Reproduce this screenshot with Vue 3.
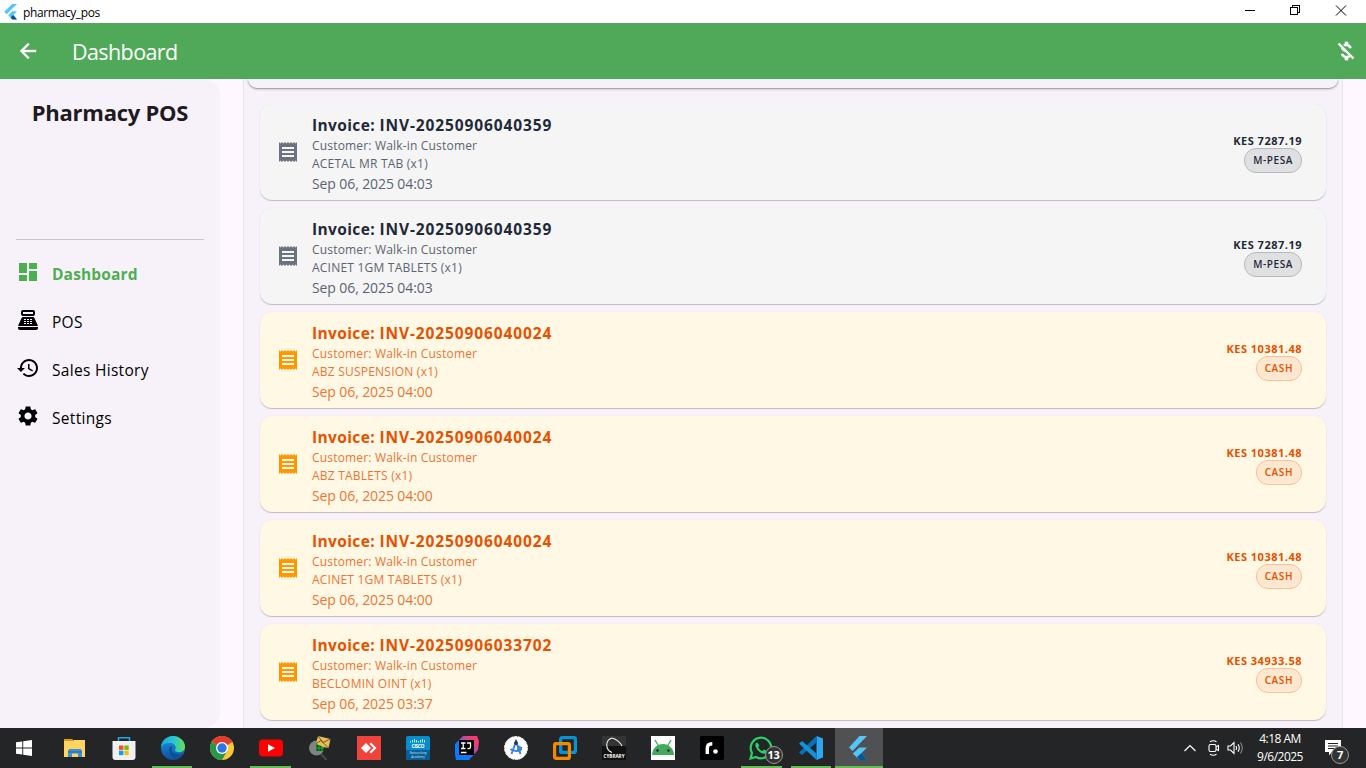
<script setup>
const receipt = 'M18 17H6v-2h12v2zm0-4H6v-2h12v2zm0-4H6V7h12v2zM3 22l1.5-1.5L6 22l1.5-1.5L9 22l1.5-1.5L12 22l1.5-1.5L15 22l1.5-1.5L18 22l1.5-1.5L21 22V2l-1.5 1.5L18 2l-1.5 1.5L15 2l-1.5 1.5L12 2l-1.5 1.5L9 2 7.5 3.5 6 2 4.5 3.5 3 2v20z'

const menu = [
  { label: 'Dashboard', active: true, d: 'M3 13h8V3H3v10zm0 8h8v-6H3v6zm10 0h8V11h-8v10zm0-18v6h8V3h-8z' },
  { label: 'POS', cls: 'pos', d: 'M17 2H7c-1.1 0-2 .9-2 2v2c0 1.1.9 2 2 2h10c1.1 0 2-.9 2-2V4c0-1.1-.9-2-2-2zm0 4H7V4h10v2zm3 16H4c-1.1 0-2-.9-2-2v-1h20v1c0 1.1-.9 2-2 2zm-1.47-11.81C18.21 9.47 17.49 9 16.7 9H7.3c-.79 0-1.51.47-1.83 1.19L2 18h20l-3.47-7.81zM9.500 16h-1.500v-1h2v1zm0-2h-1.500v-1h2v1zm0-2h-1.500v-1h2v1zm3.500 4h-2v-1h2v1zm0-2h-2v-1h2v1zm0-2h-2v-1h2v1zm3 4h-2v-1h2v1zm0-2h-2v-1h2v1zm0-2h-2v-1h2v1z' },
  { label: 'Sales History', cls: 'hist', d: 'M13 3c-4.97 0-9 4.03-9 9H1l3.89 3.89.07.14L9 12H6c0-3.87 3.13-7 7-7s7 3.13 7 7-3.13 7-7 7c-1.93 0-3.68-.79-4.94-2.06l-1.42 1.42C8.27 19.99 10.51 21 13 21c4.97 0 9-4.03 9-9s-4.03-9-9-9zm-1 5v5l4.28 2.54.72-1.21-3.5-2.08V8H12z' },
  { label: 'Settings', cls: 'set', d: 'M19.14 12.94c.04-.3.06-.61.06-.94 0-.32-.02-.64-.07-.94l2.03-1.58c.18-.14.23-.41.12-.61l-1.92-3.32c-.12-.22-.37-.29-.59-.22l-2.39.96c-.5-.38-1.03-.7-1.62-.94l-.36-2.54c-.04-.24-.24-.41-.48-.41h-3.84c-.24 0-.43.17-.47.41l-.36 2.54c-.59.24-1.13.57-1.62.94l-2.39-.96c-.22-.08-.47 0-.59.22L2.74 8.87c-.12.21-.08.47.12.61l2.03 1.58c-.05.3-.09.63-.09.94s.02.64.07.94l-2.03 1.58c-.18.14-.23.41-.12.61l1.92 3.32c.12.22.37.29.59.22l2.39-.96c.5.38 1.03.7 1.62.94l.36 2.54c.05.24.24.41.48.41h3.84c.24 0 .44-.17.47-.41l.36-2.54c.59-.24 1.13-.56 1.62-.94l2.39.96c.22.08.47 0 .59-.22l1.92-3.32c.12-.22.07-.47-.12-.61l-2.01-1.58zM12 15.6c-1.98 0-3.6-1.62-3.6-3.6s1.62-3.6 3.6-3.6 3.6 1.62 3.6 3.6-1.62 3.6-3.6 3.6z' },
]

const invoices = [
  { no: 'INV-20250906040359', item: 'ACETAL MR TAB (x1)', date: 'Sep 06, 2025 04:03', total: '7287.19', pay: 'M-PESA' },
  { no: 'INV-20250906040359', item: 'ACINET 1GM TABLETS (x1)', date: 'Sep 06, 2025 04:03', total: '7287.19', pay: 'M-PESA' },
  { no: 'INV-20250906040024', item: 'ABZ SUSPENSION (x1)', date: 'Sep 06, 2025 04:00', total: '10381.48', pay: 'CASH' },
  { no: 'INV-20250906040024', item: 'ABZ TABLETS (x1)', date: 'Sep 06, 2025 04:00', total: '10381.48', pay: 'CASH' },
  { no: 'INV-20250906040024', item: 'ACINET 1GM TABLETS (x1)', date: 'Sep 06, 2025 04:00', total: '10381.48', pay: 'CASH' },
  { no: 'INV-20250906033702', item: 'BECLOMIN OINT (x1)', date: 'Sep 06, 2025 03:37', total: '34933.58', pay: 'CASH' },
]
</script>

<template>
  <div class="window">
    <header class="titlebar">
      <svg class="logo" width="13" height="16" viewBox="0 0 13 16">
        <path d="M8.200 0H13L2.600 10.200.200 7.800z" fill="#54c5f8" />
        <path d="M8.200 7.300H13L9.400 11 13 15.500H8.500L4.200 11.200z" fill="#54c5f8" />
        <path d="M6.600 13.500L9.200 11.100 13 15.500H8.500z" fill="#01579b" />
      </svg>
      <span class="app-name">pharmacy_pos</span>
      <svg class="controls" width="121" height="23" viewBox="0 0 121 23" fill="none" stroke="#000" shape-rendering="crispEdges">
        <path d="M0 10.500h10M45.500 7.500h7v7h-7zM47.500 7V5.500h7v7H53" />
        <path d="M91 5.500l10 10M101 5.500l-10 10" shape-rendering="auto" />
      </svg>
    </header>

    <div class="appbar">
      <svg width="24" height="24" viewBox="0 0 24 24" fill="#fff" stroke="#fff" stroke-width=".4"><path d="M20 11H7.830l5.590-5.590L12 4l-8 8 8 8 1.410-1.410L7.830 13H20v-2z" /></svg>
      <h1>Dashboard</h1>
      <svg class="money" width="24" height="24" viewBox="0 0 24 24" fill="#fff" stroke="#fff" stroke-width=".7"><path d="M12.500 6.900c1.780 0 2.440.85 2.500 2.100h2.210c-.07-1.720-1.120-3.300-3.210-3.810V3h-3v2.160c-.53.12-1.030.3-1.480.54l1.470 1.470c.41-.17.91-.27 1.510-.27zM5.330 4.060L4.060 5.330 7.500 8.770c0 2.080 1.560 3.210 3.910 3.910l3.510 3.510c-.34.48-1.050.91-2.420.91-2.060 0-2.870-.92-2.980-2.100h-2.200c.12 2.190 1.760 3.420 3.680 3.830V21h3v-2.150c.96-.18 1.820-.55 2.450-1.120l2.220 2.220 1.270-1.270L5.330 4.060z" /></svg>
    </div>

    <div class="body">
      <aside>
        <div class="brand">Pharmacy POS</div>
        <nav>
          <div v-for="m in menu" :key="m.label" class="nav-item" :class="[m.cls, { active: m.active }]">
            <svg width="24" height="24" viewBox="0 0 24 24" fill="currentColor" fill-rule="evenodd"><path :d="m.d" /></svg>
            <span>{{ m.label }}</span>
          </div>
        </nav>
      </aside>
      <main>
        <div class="summary"></div>
        <article v-for="(v, i) in invoices" :key="i" :class="{ cash: v.pay === 'CASH' }">
          <svg width="24" height="24" viewBox="0 0 24 24" class="receipt"><path :d="receipt" /></svg>
          <div class="info">
            <div class="no">Invoice: <span>{{ v.no }}</span></div>
            <div class="small">Customer: Walk-in Customer</div>
            <div class="small caps">{{ v.item }}</div>
            <div class="date">{{ v.date }}</div>
          </div>
          <div class="amount">
            <div class="total">KES {{ v.total }}</div>
            <div class="chip">{{ v.pay }}</div>
          </div>
        </article>
      </main>
    </div>

    <footer class="taskbar">
      <div class="task">
        <svg width="16" height="16" viewBox="0 0 16 16" fill="#fff"><path d="M0 2.300l6.300-.9v6.100H0zM7.200 1.300L16 0v7.500H7.200zM0 8.400h6.300v6.200L0 13.700zM7.200 8.400H16V16l-8.800-1.300z" /></svg>
      </div>
      <div class="task">
        <svg width="24" height="24" viewBox="0 0 24 24"><path d="M1 3h8.500l1.500 2.500H1z" fill="#e09b00" /><path d="M1 5h9l1-1h11v17H1z" fill="#ffd561" /><path d="M5 21v-6.500L6.500 13h11l1.500 1.500V21h-4v-3.500H9V21z" fill="#3d91d3" /><path d="M5 15h14v2H5z" fill="#2a7fc4" /></svg>
      </div>
      <div class="task">
        <svg width="24" height="24" viewBox="0 0 24 24"><path d="M6.500 6V1.700h11V6" fill="none" stroke="#1ca9e8" stroke-width="1.500" /><path d="M.5 5h23v16a3 3 0 0 1-3 3h-17a3 3 0 0 1-3-3z" fill="#f0f0f0" /><path d="M7 9.500h4.400v4.400H7z" fill="#f25022" /><path d="M12.300 9.500h4.400v4.400h-4.400z" fill="#7fba00" /><path d="M7 14.700h4.400v4.400H7z" fill="#00a4ef" /><path d="M12.300 14.700h4.400v4.400h-4.400z" fill="#ffb900" /></svg>
      </div>
      <div class="task open">
        <svg width="24" height="24" viewBox="0 0 24 24">
          <defs>
            <linearGradient id="eg1"><stop stop-color="#1aa7df" /><stop offset=".55" stop-color="#2bc7cc" /><stop offset="1" stop-color="#65e04e" /></linearGradient>
            <linearGradient id="eg2" x1="0" y1="0" x2="0" y2="1"><stop stop-color="#1b9ae0" /><stop offset="1" stop-color="#0c4fa3" /></linearGradient>
          </defs>
          <circle cx="12" cy="12" r="12" fill="url(#eg2)" />
          <path d="M0 11C.5 5 5.500 0 12 0s12 5 12 10.700c0 3.300-2.600 5.500-5.800 5.500-3 0-4.500-1.200-4.300-2 .2-.7 1-1.200.8-3C14.400 8.500 11.800 7 8.800 7 4.500 7 1.200 8.700 0 11z" fill="url(#eg1)" />
          <path d="M8.700 11.500C6.500 17 10.500 21.700 15 21.900c3 .1 5.500-1.400 7.300-3.400.4-.5 0-.9-.5-.7-5 2-9.500.2-10.900-2.700-.7-1.500-.4-3.200.5-4.400-1-.5-2.200-.1-2.700.8z" fill="#0d4f96" />
        </svg>
      </div>
      <div class="task">
        <svg width="24" height="24" viewBox="0 0 24 24"><circle cx="12" cy="12" r="12" fill="#fcc934" /><path d="M12 12L1.600 6A12 12 0 0 1 22.400 6z" fill="#e33b2e" /><path d="M1.600 6A12 12 0 0 0 12 24l5.200-9L12 12z" fill="#279847" /><circle cx="12" cy="12" r="6" fill="#fff" /><circle cx="12" cy="12" r="4.700" fill="#2b75e8" /></svg>
      </div>
      <div class="task open">
        <svg width="24" height="24" viewBox="0 0 24 24"><rect y="3.500" width="24" height="17" rx="4" fill="#f00" /><path d="M9 8.300l7 3.700-7 3.700z" fill="#fff" /></svg>
      </div>
      <div class="task">
        <svg width="24" height="24" viewBox="0 0 24 24"><path d="M13 18l5.500 6" stroke="#444c50" stroke-width="2" /><circle cx="8.500" cy="12" r="7.500" fill="#7e8580" /><path d="M8.500 6h7.500v9H8.500z" fill="#0b4d14" /><path d="M8.500 8.500H16M8.500 12H16M11 6v9M14 6v9" stroke="#16b329" stroke-width="1" /><path d="M10 0l12.500 3-2 9-5.500-1-7-3.500z" fill="#e8bd59" /><path d="M10 0l5 6.500 7.500-3.500M8 7.500l5-3 7.500 7.500" fill="none" stroke="#564316" stroke-width=".8" /></svg>
      </div>
      <div class="task">
        <svg width="24" height="24" viewBox="0 0 24 24"><path d="M0 0h24v24H0z" fill="#ef443b" /><path d="M4 12l5-5 5 5-5 5zM12.500 8L14 6.500l5.500 5.500-5.500 5.500-1.500-1.500 4-4z" fill="#fff" /></svg>
      </div>
      <div class="task">
        <svg width="24" height="24" viewBox="0 0 24 24"><rect width="24" height="24" rx="2" fill="#078dcc" /><path d="M0 14h24v8a2 2 0 0 1-2 2H2a2 2 0 0 1-2-2z" fill="#075d96" /><path d="M4.500 5v1.500M6.500 4v2.500M8.500 3v3.500M10.500 4v2.500M12.500 5v1.500M14.500 4v2.500M16.500 3v3.500M18.500 4v2.500" stroke="#d8f4ff" stroke-width=".9" /><text x="12" y="12" text-anchor="middle" font-size="5" font-weight="700" fill="#fff" textLength="13">CISCO</text><text x="12" y="18" text-anchor="middle" font-size="3.200" fill="#c8e3f3">Networking</text><text x="12" y="21.500" text-anchor="middle" font-size="3.200" fill="#c8e3f3">Academy</text></svg>
      </div>
      <div class="task">
        <svg width="24" height="24" viewBox="0 0 24 24"><defs><linearGradient id="ij" x1="0" y1="1" x2="1" y2="0"><stop stop-color="#087cfa" /><stop offset=".35" stop-color="#087cfa" /><stop offset=".55" stop-color="#8a55c8" /><stop offset=".75" stop-color="#e83e7b" /><stop offset="1" stop-color="#fe3968" /></linearGradient></defs><path d="M8 0h14l2 5-1 9-9 10H1l-1-6V8z" fill="url(#ij)" /><path d="M4 4h15v15H4z" fill="#000" /><path d="M6 7h4.500M8.200 7v5.500M6 12.500h4.500M12 7h3.500v4c0 1.500-1.500 2-3 1.300M6 16.500h5.500" fill="none" stroke="#fff" stroke-width="1.300" /></svg>
      </div>
      <div class="task">
        <svg width="24" height="24" viewBox="0 0 24 24"><circle cx="12" cy="12" r="11.500" fill="#fff" stroke="#e8eaed" stroke-dasharray="3 1" /><path d="M14 9l4.500 2.500-2 4h-4z" fill="#34a866" /><path d="M11.500 7L7.500 18M12.500 7l4 11M6.500 13c3 2.500 8.500 2.500 11 0" fill="none" stroke="#3c82ee" stroke-width="2" /><circle cx="12" cy="7" r="2" fill="#263b50" /><path d="M12 3.500v3" stroke="#263b50" stroke-width="1.500" /></svg>
      </div>
      <div class="task">
        <svg width="24" height="24" viewBox="0 0 24 24" fill="none" stroke-width="3.200"><rect x="7.600" y="1.600" width="14.800" height="14.800" rx="1.500" stroke="#0d91d2" /><rect x="1.600" y="7.600" width="14.800" height="14.800" rx="1.500" stroke="#f38b00" /><path d="M7.600 10v4.900a1.500 1.500 0 0 0 1.500 1.500H11" stroke="#0d91d2" /></svg>
      </div>
      <div class="task">
        <svg width="24" height="24" viewBox="0 0 24 24"><path d="M0 0h24v24H0z" fill="#111" /><path d="M0 0h24v10H0z" fill="#343434" /><path d="M10 2C3 4 3 14 10 16.500M10 2c5 1.500 8 4 10 8" fill="none" stroke="#eee" stroke-width="1.100" /><text x="12" y="22.300" text-anchor="middle" font-size="5" font-weight="700" fill="#fff" textLength="21" lengthAdjust="spacingAndGlyphs">CYBRARY</text></svg>
      </div>
      <div class="task">
        <svg width="24" height="24" viewBox="0 0 24 24"><path d="M0 0h24v24H0z" fill="#fff" /><path d="M1 19C1.500 12 6 8 12 8s10.500 4 11 11z" fill="#43aa5b" /><path d="M4 4l3.500 6M20 4l-3.500 6" stroke="#43aa5b" stroke-width="1.400" /><circle cx="6.500" cy="14.500" r="1.200" fill="#123" /><circle cx="17.500" cy="14.500" r="1.200" fill="#123" /></svg>
      </div>
      <div class="task">
        <svg width="24" height="24" viewBox="0 0 24 24"><rect width="24" height="24" rx="2" fill="#000" /><path d="M7.300 18v-6c0-3 1.700-4.300 5-4.300" fill="none" stroke="#fff" stroke-width="3.400" /><circle cx="15.500" cy="15.500" r="2.300" fill="#fff" /></svg>
      </div>
      <div class="task open">
        <svg width="24" height="24" viewBox="0 0 24 24"><path d="M1.500 22.500L3 17a10.300 10.300 0 1 1 4 4z" fill="none" stroke="#25d366" stroke-width="2.200" /><path d="M8.200 6.500c-1.200.2-2 1.500-1.800 3 .5 3.800 5 8 8.500 8.300 1.700 0 3-1.200 3-2.700l-3-1.700-1.500 1.500c-1.800-.5-3.600-2.400-4.200-4l1.200-1.500z" fill="#25d366" /></svg>
        <span class="badge">13</span>
      </div>
      <div class="task open">
        <svg width="24" height="24" viewBox="0 0 24 24"><path d="M17.500 0L24 2.500v19L17.500 24z" fill="#2ba7f2" /><path d="M17.500 0v6.500L3 19 0 16.500z" fill="#0870b8" /><path d="M17.500 24v-6.500L3 5 0 7.500z" fill="#1590dc" /></svg>
      </div>
      <div class="task current">
        <svg width="24" height="24" viewBox="0 0 24 24"><path d="M12.500 0H20L5.500 15 2 11.500z" fill="#54c5f8" /><path d="M12.500 11.500H20L14.500 17l5.500 7h-7.500l-6.700-6.500z" fill="#54c5f8" /><path d="M10 21l4.500-4 5.500 7h-7.500z" fill="#01579b" /></svg>
      </div>

      <div class="tray">
        <svg width="12" height="8" viewBox="0 0 12 8" fill="none" stroke="#fff" stroke-width="1.200"><path d="M.5 7L6 1.500 11.500 7" /></svg>
        <svg class="meet" width="12" height="16" viewBox="0 0 12 16" fill="none" stroke="#fff" stroke-width="1.100"><rect x="1" y="4.500" width="7" height="7" rx="1.500" /><path d="M8 7l2.500-1.500v5L8 9M2 1.800C4 .5 6.500.5 8.500 1.800M2 14.200c2 1.300 4.500 1.300 6.500 0" /></svg>
        <svg class="vol" width="17" height="14" viewBox="0 0 17 14" fill="none" stroke="#fff" stroke-width="1.100"><path d="M1 5h2.500L7 1.500v11L3.500 9H1z" /><path d="M9 5q1.200 2 0 4M11 3.300q2.500 3.700 0 7.400" /><path d="M13.300 1.500q4 5.500 0 11" stroke="#888" /></svg>
        <div class="clock"><div>4:18 AM</div><div>9/6/2025</div></div>
        <div class="notice">
          <svg width="16" height="16" viewBox="0 0 16 16"><path d="M0 0h16v12H7l-3 3.500V12H0z" fill="#fff" /><path d="M3 3.500h10M3 6h10M3 8.500h7" stroke="#222" /></svg>
          <span class="badge">7</span>
        </div>
      </div>
    </footer>
  </div>
</template>

<style>
body { margin: 0; overflow: hidden; }
</style>

<style scoped>
.window { width: 1366px; height: 768px; display: flex; flex-direction: column; overflow: hidden; background: #fef7ff; font-family: "Open Sans", "Noto Sans", sans-serif; color: #1d1b20; }
.window svg { display: block; flex: none; }
.titlebar { height: 23px; flex: none; display: flex; align-items: center; background: #fff; color: #000; box-sizing: border-box; padding-left: 4px; }
.app-name { margin: 1px 0 0 6px; font-size: 12px; letter-spacing: -.37px; white-space: nowrap; }
.controls { margin-left: auto; }
.appbar { height: 56px; flex: none; display: flex; align-items: center; background: #50a958; box-sizing: border-box; padding: 0 8px 0 16px; }
.appbar h1 { margin: 1px 0 0 32px; font-size: 21.500px; line-height: 28px; font-weight: 400; letter-spacing: -.6px; color: #fff; }
.money { margin-left: auto; }
.body { flex: 1; min-height: 0; display: flex; gap: 23px; }
aside { width: 220px; box-sizing: border-box; padding: 0 16px; background: #f7f2fa; border-radius: 0 16px 16px 0; }
.brand { height: 161px; padding-top: 17px; box-sizing: border-box; border-bottom: 1px solid #cac4d0; text-align: center; font-size: 22px; line-height: 32px; font-weight: 700; letter-spacing: -.25px; white-space: nowrap; }
nav { padding-top: 9px; }
.nav-item { height: 48px; display: flex; align-items: center; color: #000; font-size: 15.500px; letter-spacing: .3px; }
.nav-item svg { margin: -2px 12px 0 0; }
.nav-item span { line-height: 24px; padding-top: 1px; }
.nav-item.active { color: #4caf50; font-weight: 700; letter-spacing: .15px; }
main { width: 1100px; height: 649px; box-sizing: border-box; padding: 0 16px; border: solid #e9e3ec; border-width: 0 1px; background: #f7f2fa; display: flex; flex-direction: column; gap: 8px; overflow: hidden; }
.summary { height: 9px; flex: none; margin: 0 -12px 8px; border-radius: 0 0 12px 12px; background: #f7f2fa; box-shadow: 0 1px 3px rgba(0, 0, 0, .25), 0 1px 1px rgba(0, 0, 0, .2); }
article { height: 96px; flex: none; box-sizing: border-box; display: flex; align-items: center; padding: 0 24px 0 16px; border-radius: 12px; background: #f5f5f5; box-shadow: 0 1px 1px rgba(0, 0, 0, .22), 0 0 1px rgba(0, 0, 0, .08); color: #1f2937; }
article.cash { background: #fff8e5; color: #e65100; }
.receipt { fill: #6b7280; }
.cash .receipt { fill: #ff9800; }
.info { margin-left: 12px; padding-top: 2px; white-space: nowrap; color: #5b6470; }
.cash .info { color: #ed7434; }
.no { font-size: 15.500px; line-height: 24px; font-weight: 700; letter-spacing: .38px; color: #1f2937; }
.no span { letter-spacing: .89px; }
.cash .no { color: #e65100; }
.small { font-size: 12px; line-height: 18px; letter-spacing: .18px; }
.caps { letter-spacing: .22px; }
.date { font-size: 14px; line-height: 20px; letter-spacing: -.1px; position: relative; top: 1px; }
.amount { margin-left: auto; display: flex; flex-direction: column; align-items: flex-end; white-space: nowrap; }
.total { font-size: 11px; line-height: 16px; font-weight: 700; letter-spacing: .5px; position: relative; top: 1px; }
.chip { box-sizing: border-box; height: 25px; padding: 0 8px; border: 1px solid #b6babf; border-radius: 12px; background: #dfe0e2; font-size: 10px; line-height: 23px; font-weight: 600; letter-spacing: .58px; }
.cash .chip { border-color: #f6c19c; background: #fce7d0; }
.taskbar { height: 40px; flex: none; display: flex; background: #242526; color: #fff; box-sizing: border-box; }
.task { width: 49.100px; height: 40px; flex: none; position: relative; display: flex; align-items: center; justify-content: center; }
.task > svg { margin-left: 1px; }
.task:nth-child(n+2):nth-child(-n+5) > svg { margin-left: 2px; }
.task:first-child > svg { margin-left: -1px; }
.open::after, .current::after { content: ""; position: absolute; left: 5px; right: 4px; bottom: 0; height: 2px; background: #66bb55; }
.current { background: #505152; width: 48px; }
.current::after { left: 0; right: 0; }
.badge { position: absolute; right: 3px; bottom: 4px; width: 18px; height: 18px; box-sizing: border-box; border: 1px solid #999; border-radius: 50%; background: #333; font-size: 11px; line-height: 16px; font-weight: 700; letter-spacing: -.3px; text-align: center; }
.tray { margin-left: auto; display: flex; align-items: center; padding-right: 25px; }
.meet { margin-left: 12px; }
.vol { margin-left: 7px; }
.clock { width: 70px; margin-left: 1px; text-align: center; font-size: 12px; line-height: 18px; letter-spacing: -.5px; }
.notice { position: relative; margin-left: 10px; }
.notice .badge { right: -8px; bottom: -8px; }
</style>
